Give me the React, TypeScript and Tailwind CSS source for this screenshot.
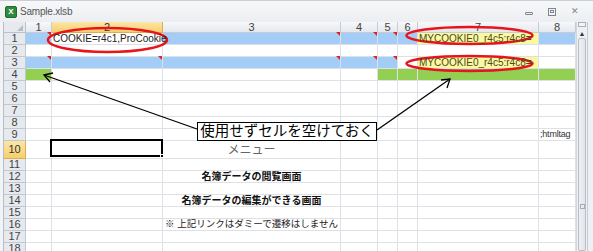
import React from "react";

type Bg = "w" | "b" | "y" | "g";

const colW = ["w-[26px]", "w-[111px]", "w-[178px]", "w-[37px]", "w-[20px]", "w-[20px]", "w-[121px]", "w-[37px]"];

const bgClass: Record<Bg, string> = {
  w: "bg-white",
  b: "bg-[#a3cdf6]",
  y: "bg-[#fbf8a2]",
  g: "bg-[#93cf52]",
};

const rowBg: Record<number, Bg[]> = {
  1: ["b", "w", "b", "b", "b", "b", "y", "b"],
  3: ["b", "b", "b", "b", "b", "w", "y", "w"],
  4: ["g", "w", "w", "w", "g", "g", "g", "g"],
};

// comment markers (red corner) per row -> column indexes
const marks: Record<number, number[]> = {
  1: [0, 2, 3, 4],
  3: [0, 1, 2, 3, 4],
};

const rows = Array.from({ length: 18 }, (_, i) => i + 1);

const cellText = (r: number, c: number) => {
  if (r === 1 && c === 1)
    return <span className="relative z-10 pl-[1px] text-[10px] text-[#222]">COOKIE=r4c1,ProCookie</span>;
  if ((r === 1 || r === 3) && c === 6)
    return <span className="relative z-10 pl-[1px] text-[10px] text-[#4a4a1c]">MYCOOKIE0_r4c5:r4c8=</span>;
  if (r === 9 && c === 7)
    return <span className="relative z-10 pl-[1px] text-[9px] tracking-[-0.2px] text-[#333]">;htmltag</span>;
  return null;
};

const centerText: Record<number, React.ReactNode> = {
  10: <span className="text-[12px] text-[#666]">メニュー</span>,
  12: <span className="text-[10px] font-bold text-[#111]">名簿データの閲覧画面</span>,
  14: <span className="text-[10px] font-bold text-[#111]">名簿データの編集ができる画面</span>,
  16: <span className="text-[9.5px] text-[#222]">※ 上記リンクはダミーで遷移はしません</span>,
};

const Sheet = () => (
  <div className="w-[572px] bg-white">
    {/* column header */}
    <div className="flex h-[11px]">
      <div className="relative w-[22px] border-r border-b border-[#b9c3cf] bg-[#e6eaef]">
        <div className="absolute right-[2px] bottom-[1px] w-0 h-0 border-l-[6px] border-l-transparent border-b-[6px] border-b-[#b4bcc6]" />
      </div>
      {colW.map((w, c) => (
        <div
          key={c}
          className={`${w} flex items-center justify-center border-r border-b text-[11px] leading-none ${
            c === 1
              ? "bg-gradient-to-b from-[#fbe6a8] to-[#f5cf6a] border-[#d9b04d] text-[#333]"
              : "bg-gradient-to-b from-[#f7f8fa] to-[#e4e8ee] border-[#c5ccd5] text-[#444]"
          }`}
        >
          {c + 1}
        </div>
      ))}
    </div>
    {rows.map((r) => (
      <div key={r} className={`flex ${r === 10 ? "h-[18px]" : "h-[12px]"}`}>
        <div
          className={`w-[22px] flex items-center justify-center border-r border-b text-[11px] leading-none ${
            r === 10
              ? "bg-gradient-to-b from-[#fbe6a8] to-[#f5cf6a] border-[#d9b04d] text-[#333]"
              : "bg-[#e6eaef] border-[#c0c8d2] text-[#444]"
          }`}
        >
          {r}
        </div>
        {colW.map((w, c) => {
          const bg = rowBg[r]?.[c] ?? "w";
          return (
            <div
              key={c}
              className={`${w} relative flex items-center whitespace-nowrap border-r border-b border-[#dde0e4] ${bgClass[bg]} ${
                c === 2 ? "justify-center" : ""
              }`}
            >
              {c === 2 ? centerText[r] : cellText(r, c)}
              {marks[r]?.includes(c) && (
                <div className="absolute -top-px right-0 w-0 h-0 border-l-[4px] border-l-transparent border-t-[4px] border-t-[#e02020]" />
              )}
              {r === 10 && c === 1 && (
                <div className="absolute -left-[2px] -top-[2px] w-[113px] h-[18px] border-2 border-black">
                  <div className="absolute -right-[3px] -bottom-[3px] w-[4px] h-[4px] bg-black border border-white" />
                </div>
              )}
            </div>
          );
        })}
      </div>
    ))}
  </div>
);

const ScrollBar = () => (
  <div className="w-[11px] flex flex-col bg-[#eef0f3] border-l border-[#d4d8de]">
    <div className="h-[5px] mx-[1px] border border-[#a9b1bb] bg-[#f4f5f7]" />
    <div className="h-[10px] mt-[1px] flex items-center justify-center text-[7px] leading-none text-[#333]">▲</div>
    <div className="flex-1 mx-[1px] rounded-[2px] border border-[#b8bfc8] bg-gradient-to-r from-[#eef0f3] to-[#e2e5ea] flex flex-col items-center pt-[165px]">
      <div className="w-[5px] h-[5px] border border-[#a5acb6]" />
    </div>
  </div>
);

const Overlay = () => (
  <svg className="absolute inset-0 pointer-events-none" width="593" height="251" viewBox="0 0 593 251">
    <ellipse cx="107.5" cy="40" rx="59.5" ry="12" fill="none" stroke="#e8141c" strokeWidth="2.5" />
    <ellipse cx="469.5" cy="35.5" rx="63" ry="8.5" fill="none" stroke="#e8141c" strokeWidth="2.5" />
    <ellipse cx="469.5" cy="63.5" rx="63" ry="7.5" fill="none" stroke="#e8141c" strokeWidth="2.5" />
    <g stroke="#000" strokeWidth="1.3" fill="none">
      <line x1="197" y1="129" x2="44" y2="75" />
      <polyline points="53,73 44,75 50,82" />
      <line x1="377" y1="130" x2="450" y2="79" />
      <polyline points="441,80 450,79 447,88" />
    </g>
  </svg>
);

export default function App() {
  return (
    <div className="relative w-[593px] h-[251px] overflow-hidden bg-[#eef0f3] font-['Liberation_Sans','Noto_Sans_CJK_JP',sans-serif]">
      {/* title bar */}
      <div className="h-[22px] flex items-center pl-[5px] bg-gradient-to-b from-[#f7f8f9] to-[#eceef1] border-t border-[#c9ced6]">
        <div className="w-[12px] h-[12px] rounded-[2px] bg-[#2e8b3d] border border-[#1d6b2a] flex items-center justify-center mt-[1px]">
          <span className="text-[8px] font-bold leading-none text-white">X</span>
        </div>
        <span className="ml-[3px] text-[10px] tracking-[-0.2px] text-[#555]">Sample.xlsb</span>
        <div className="ml-auto mr-[14px] flex items-center gap-[15px]">
          <div className="w-[8px] h-[3px] mt-[3px] border border-[#7d8590] rounded-[1px]" />
          <div className="w-[8px] h-[8px] border border-[#7d8590] flex items-start justify-center">
            <div className="w-[4px] h-[3px] mt-[1px] border border-[#7d8590]" />
          </div>
          <span className="text-[9px] leading-none text-[#7d8590]">✕</span>
        </div>
      </div>
      <div className="flex h-[229px]">
        <div className="w-[4px] bg-[#f2f3f5] border-r border-[#b7bec8]" />
        <Sheet />
        <ScrollBar />
        <div className="w-[6px] bg-[#eef0f3] border-l border-[#c6ccd4]" />
      </div>
      <Overlay />
      {/* callout */}
      <div className="absolute left-[197px] top-[122px] w-[180px] h-[19px] flex items-center justify-center whitespace-nowrap bg-white border border-black text-[14.5px] leading-none text-black">
        使用せずセルを空けておく
      </div>
    </div>
  );
}
